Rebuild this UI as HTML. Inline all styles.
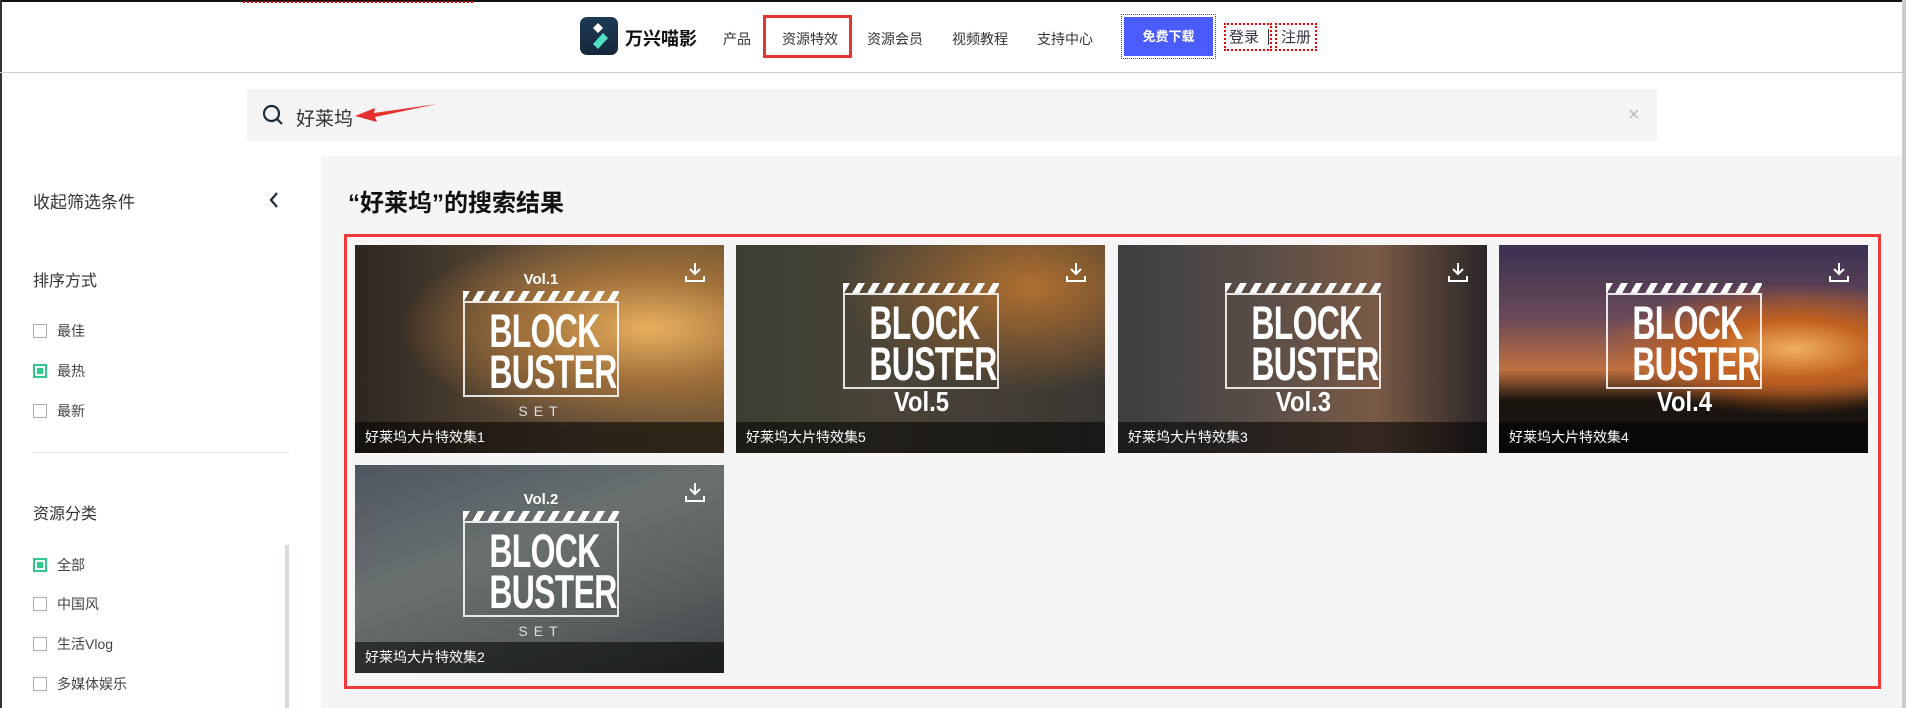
<!DOCTYPE html>
<html><head><meta charset="utf-8"><style>
*{margin:0;padding:0;box-sizing:border-box}
body{width:1906px;height:708px;overflow:hidden;background:#fff;font-family:"Liberation Sans","Noto Sans CJK SC",sans-serif;position:relative;color:#222}
.a{position:absolute}
.nav{font-size:14px;color:#333;top:29px}
.cb{position:absolute;left:33px;width:14px;height:14px;border:1px solid #aaa;background:#fff}
.cb.on{border:2px solid #2fc98a}
.cb.on:after{content:"";position:absolute;left:2px;top:2px;width:6px;height:6px;background:#2fc98a}
.lab{position:absolute;left:57px;font-size:14px;color:#444}
.card{position:absolute;width:369px;height:208px;overflow:hidden}
.cap{position:absolute;left:0;bottom:0;width:100%;height:31px;background:rgba(0,0,0,.55);color:#fff;font-size:14px;line-height:31px;padding-left:10px}
.box{position:absolute;border:2px solid rgba(255,255,255,.85);width:156px;height:96px;color:#fff;font-weight:bold;text-align:center;font-size:47px;line-height:41px;letter-spacing:-1px;padding-top:7px}
.box span{display:block;transform:scaleX(.68)}
.box:before{content:"";position:absolute;left:-2px;top:-12px;width:156px;height:10px;background:repeating-linear-gradient(120deg,#fff 0 6px,transparent 6px 13px)}
.vol{position:absolute;color:#fff;font-weight:bold;font-size:28px;width:156px;text-align:center}
.vol span{display:inline-block;transform:scaleX(.85)}
.dl{position:absolute;right:18px;top:16px;width:22px;height:22px}
</style></head><body>
<div class="a" style="left:0;top:0;width:1906px;height:2px;background:#111"></div>
<div class="a" style="left:243px;top:1px;width:230px;height:2px;border-top:2px dotted #e00"></div>
<div class="a" style="left:0;top:0;width:2px;height:708px;background:#333"></div>
<div class="a" style="left:1902px;top:0;width:4px;height:708px;background:#ccc"></div>
<div class="a" style="left:0;top:72px;width:1902px;height:1px;background:#ccc"></div>
<div class="a" style="left:580px;top:17px;width:38px;height:38px;border-radius:7px;background:linear-gradient(#1d3a55,#16283a)">
<svg width="38" height="38" viewBox="0 0 38 38"><path d="M13 11l5-5 5 5-5 5z" fill="#fff"/><path d="M13 27l10-11 5 5-10 11z" fill="#4fe0c0"/></svg></div>
<div class="a" style="left:625px;top:25px;font-size:18px;font-weight:bold;color:#111">万兴喵影</div>
<div class="a nav" style="left:723px">产品</div>
<div class="a" style="left:763px;top:15px;width:89px;height:43px;border:3px solid #e63333"></div>
<div class="a nav" style="left:782px">资源特效</div>
<div class="a nav" style="left:867px">资源会员</div>
<div class="a nav" style="left:952px">视频教程</div>
<div class="a nav" style="left:1037px">支持中心</div>
<div class="a" style="left:1121px;top:14px;width:95px;height:45px;border:1px dotted #e00"></div>
<div class="a" style="left:1124px;top:17px;width:89px;height:39px;background:#4a5cfc;color:#fff;font-size:13px;font-weight:bold;text-align:center;line-height:39px">免费下载</div>
<div class="a" style="left:1224px;top:23px;width:48px;height:28px;border:2px dotted #e00"></div>
<div class="a" style="left:1275px;top:23px;width:42px;height:28px;border:2px dotted #e00"></div>
<div class="a" style="left:1229px;top:26px;font-size:15px;color:#334">登录</div>
<div class="a" style="left:1268px;top:29px;width:1px;height:16px;background:#333"></div>
<div class="a" style="left:1281px;top:26px;font-size:15px;color:#334">注册</div>
<div class="a" style="left:247px;top:89px;width:1410px;height:52px;background:#f4f4f4"></div>
<svg class="a" style="left:262px;top:104px" width="22" height="22" viewBox="0 0 22 22"><circle cx="9.5" cy="9.5" r="7.5" fill="none" stroke="#1d2b3a" stroke-width="2.2"/><path d="M15 15l5 5" stroke="#1d2b3a" stroke-width="2.2"/></svg>
<div class="a" style="left:296px;top:104px;font-size:19px;color:#333">好莱坞</div>
<svg class="a" style="left:355px;top:100px" width="85" height="24" viewBox="0 0 85 24"><path d="M0 16L20 8 19 13 82 4 20 17 22 22z" fill="#e63030"/></svg>
<div class="a" style="left:1628px;top:104px;font-size:20px;color:#bbb">×</div>
<div class="a" style="left:33px;top:188px;font-size:17px;color:#333">收起筛选条件</div>
<svg class="a" style="left:268px;top:191px" width="12" height="18" viewBox="0 0 12 18"><path d="M9 2L3 9l6 7" fill="none" stroke="#1d2b3a" stroke-width="2.2"/></svg>
<div class="a" style="left:33px;top:267px;font-size:16px;color:#333">排序方式</div>
<div class="cb" style="top:324px"></div><div class="lab" style="top:321px">最佳</div>
<div class="cb on" style="top:364px"></div><div class="lab" style="top:361px">最热</div>
<div class="cb" style="top:404px"></div><div class="lab" style="top:401px">最新</div>
<div class="a" style="left:33px;top:452px;width:256px;height:1px;background:#e2e2e2"></div>
<div class="a" style="left:33px;top:500px;font-size:16px;color:#333">资源分类</div>
<div class="cb on" style="top:558px"></div><div class="lab" style="top:555px">全部</div>
<div class="cb" style="top:597px"></div><div class="lab" style="top:594px">中国风</div>
<div class="cb" style="top:637px"></div><div class="lab" style="top:634px">生活Vlog</div>
<div class="cb" style="top:677px"></div><div class="lab" style="top:674px">多媒体娱乐</div>
<div class="a" style="left:285px;top:545px;width:4px;height:163px;background:#d4dcd9"></div>
<div class="a" style="left:321px;top:156px;width:1581px;height:552px;background:#f5f5f5"></div>
<div class="a" style="left:348px;top:183px;font-size:24px;font-weight:bold;color:#111">“好莱坞”的搜索结果</div>
<div class="a" style="left:344px;top:234px;width:1537px;height:455px;border:3px solid #ee3a3a"></div>

<div class="card" style="left:355px;top:245px;background:radial-gradient(ellipse at 80% 40%,#e8b060 0,#a0703a 30%,transparent 60%),linear-gradient(90deg,#2e2620,#5a4a38 50%,#6a5236)">
<div class="vol" style="left:108px;top:26px;font-size:15px">Vol.1</div>
<div class="box" style="left:108px;top:56px"><span>BLOCK</span><span>BUSTER</span></div>
<div class="vol" style="left:108px;top:158px;font-size:14px;font-weight:normal;letter-spacing:6px;color:#ddd">SET</div>
<svg class="dl" viewBox="0 0 22 22"><path d="M11 2v11M6 8l5 5 5-5M2 15v5h18v-5" fill="none" stroke="#fff" stroke-width="2"/></svg>
<div class="cap">好莱坞大片特效集1</div></div>

<div class="card" style="left:736px;top:245px;background:radial-gradient(ellipse at 80% 20%,#b07030 0,transparent 45%),linear-gradient(90deg,#3a3e30,#4a4438 40%,#3a3632)">
<div class="box" style="left:107px;top:48px"><span>BLOCK</span><span>BUSTER</span></div>
<div class="vol" style="left:107px;top:141px"><span>Vol.5</span></div>
<svg class="dl" viewBox="0 0 22 22"><path d="M11 2v11M6 8l5 5 5-5M2 15v5h18v-5" fill="none" stroke="#fff" stroke-width="2"/></svg>
<div class="cap">好莱坞大片特效集5</div></div>

<div class="card" style="left:1118px;top:245px;background:linear-gradient(90deg,#3c3e42,#5a4e46 40%,#7a5a46 70%,#2a2626)">
<div class="box" style="left:107px;top:48px"><span>BLOCK</span><span>BUSTER</span></div>
<div class="vol" style="left:107px;top:141px"><span>Vol.3</span></div>
<svg class="dl" viewBox="0 0 22 22"><path d="M11 2v11M6 8l5 5 5-5M2 15v5h18v-5" fill="none" stroke="#fff" stroke-width="2"/></svg>
<div class="cap">好莱坞大片特效集3</div></div>

<div class="card" style="left:1499px;top:245px;background:radial-gradient(ellipse at 80% 50%,#f0b060 0,#c06020 20%,transparent 45%),linear-gradient(#3a3050,#6a4a5a 35%,#c07040 60%,#1a1410 75%)">
<div class="box" style="left:107px;top:48px"><span>BLOCK</span><span>BUSTER</span></div>
<div class="vol" style="left:107px;top:141px"><span>Vol.4</span></div>
<svg class="dl" viewBox="0 0 22 22"><path d="M11 2v11M6 8l5 5 5-5M2 15v5h18v-5" fill="none" stroke="#fff" stroke-width="2"/></svg>
<div class="cap">好莱坞大片特效集4</div></div>

<div class="card" style="left:355px;top:465px;background:linear-gradient(160deg,#4e5660,#6a7070 40%,#5a6060 70%,#3e4448)">
<div class="vol" style="left:108px;top:26px;font-size:15px">Vol.2</div>
<div class="box" style="left:108px;top:56px"><span>BLOCK</span><span>BUSTER</span></div>
<div class="vol" style="left:108px;top:158px;font-size:14px;font-weight:normal;letter-spacing:6px;color:#ddd">SET</div>
<svg class="dl" viewBox="0 0 22 22"><path d="M11 2v11M6 8l5 5 5-5M2 15v5h18v-5" fill="none" stroke="#fff" stroke-width="2"/></svg>
<div class="cap">好莱坞大片特效集2</div></div>
</body></html>
